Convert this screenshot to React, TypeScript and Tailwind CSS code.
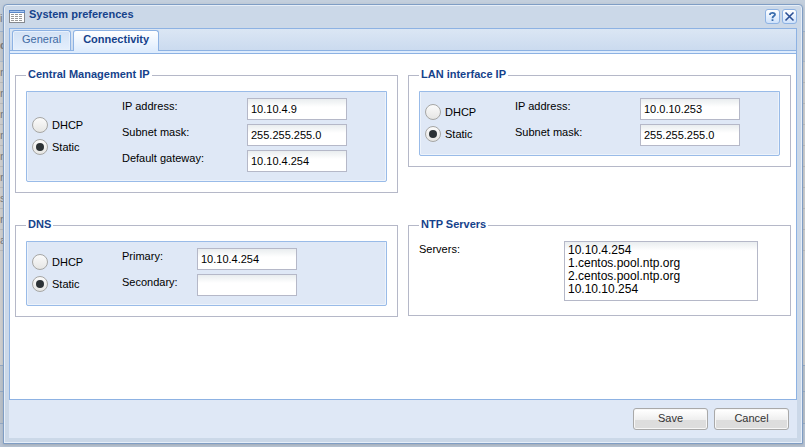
import React, { useId, useState } from "react";

const inputClass =
  "block h-[22px] w-[100px] rounded-none border border-[#b5b8c8] bg-white bg-linear-to-b from-[#e9edef] to-white to-40% px-[3px] text-[11px] text-black outline-none";

function Radio({ name, value, label, defaultChecked }: { name: string; value: string; label: string; defaultChecked?: boolean }) {
  return (
    <label className="flex h-[22px] items-center gap-1 text-[11px] leading-[14px]">
      <input
        type="radio"
        name={name}
        value={value}
        defaultChecked={defaultChecked}
        className="m-0 grid size-4 shrink-0 appearance-none place-items-center rounded-full border border-[#a6a6a4] bg-linear-to-b from-[#fbfbfb] to-[#e6e6e4] before:size-2 before:rounded-full before:bg-transparent before:content-[''] checked:before:bg-[#2c3236]"
      />
      {label}
    </label>
  );
}

function Group({ title, children }: { title: string; children: React.ReactNode }) {
  return (
    <fieldset className="min-w-0 border border-[#b5b8c8] px-[10px] pb-[10px]">
      <legend className="px-[2px] pb-[2px] text-[11px] leading-[14px] font-bold text-[#15428b]">{title}</legend>
      {children}
    </fieldset>
  );
}

type Row = { label: string; value: string };

function AddressPanel({ rows, labelWidth = "w-[125px]" }: { rows: Row[]; labelWidth?: string }) {
  const id = useId();
  return (
    <div className="mt-2 flex items-center rounded-b-xs border border-[#99bbe8] bg-[#dfe8f6] pt-[6px] pb-[9px] pl-[5px] shadow-[inset_1px_0_0_#edf3fb,inset_-1px_-1px_0_#edf3fb]">
      <div className="w-[90px] shrink-0 pt-[2px]">
        <Radio name={id} value="dhcp" label="DHCP" />
        <Radio name={id} value="static" label="Static" defaultChecked />
      </div>
      <div className="flex flex-col gap-1">
        {rows.map((row, i) => (
          <div key={row.label} className="flex">
            <label htmlFor={id + i} className={`${labelWidth} pt-px text-[11px] leading-[14px]`}>
              {row.label}
            </label>
            <input id={id + i} type="text" defaultValue={row.value} className={inputClass} />
          </div>
        ))}
      </div>
    </div>
  );
}

function Tool({ label, children }: { label: string; children: React.ReactNode }) {
  return (
    <button type="button" aria-label={label} className="grid size-[15px] place-items-center rounded-[3px] border border-[#8db2e3] bg-linear-to-b from-white to-[#cfe2fb]">
      {children}
    </button>
  );
}

function ActionButton({ children }: { children: React.ReactNode }) {
  return (
    <button
      type="button"
      className="h-[22px] w-[75px] rounded-[3px] border border-[#a9a9a9] bg-linear-to-b from-white from-5% via-[#eeeeee] via-55% to-[#dddddd] to-55% pb-[2px] text-[11px] text-[#333333] shadow-[inset_0_0_0_1px_#f7f7f7]"
    >
      {children}
    </button>
  );
}

function Backdrop() {
  const rows = ["n", "n", "n", "n", "n", "r", "s", "n", "a"];
  return (
    <div aria-hidden="true" className="absolute inset-0 bg-[#cfcfcf] text-[11px] text-[#777777]">
      <div className="h-[32px] border-b border-[#9fb3ce] bg-[#c3cfdd] pt-[8px] leading-[20px]">i</div>
      <div className="h-[30px] border-b border-[#aebccd] bg-[#c3c8ce] pt-[3px] leading-[20px] font-bold">d</div>
      {rows.map((text, i) => (
        <div key={i} className="h-[21px] border-b border-[#bbbbbb] leading-[20px]">
          {text}
        </div>
      ))}
      <div className="h-[114px]" />
      <div className="h-[27px] border-y border-[#94a9c5] bg-[#bcc3cb]" />
      <div className="h-[32px] border-b border-[#94a9c5] bg-[#b9c0c9]" />
      <div className="h-[23px] bg-[#b8c4d4]" />
    </div>
  );
}

export default function App() {
  const [tab, setTab] = useState("Connectivity");
  return (
    <div className="relative flex h-screen flex-col overflow-hidden pt-1 pr-[2px] pb-[3px] pl-[3px] font-['Liberation_Sans',Arial,sans-serif] text-black">
      <Backdrop />
      <div
        role="dialog"
        aria-labelledby="window-title"
        className="relative flex flex-1 flex-col rounded-t-[4px] border border-[#7f9dc4] bg-[#cbd8e8] px-[5px] pb-[5px] shadow-[inset_0_0_0_1px_#e6eef8,0_1px_3px_#8a8f9680]"
      >
        <header className="flex h-[23px] items-center">
          <svg className="size-4" viewBox="0 0 16 16" shapeRendering="crispEdges" aria-hidden="true">
            <path d="M.5 2.5h15v11H.5z" fill="#fff" stroke="#85898f" />
            <path d="M0 1h16v3H0z" fill="#5b87c7" />
            <path d="M1 2h14v1H1z" fill="#a9c7ee" />
            <path d="M2 5.5h12M2 7.5h12M2 9.5h12M2 11.5h12" stroke="#999" strokeDasharray="3 1" />
          </svg>
          <h1 id="window-title" className="ml-1 flex-1 pb-1.5 text-[11px] leading-[14px] font-bold text-[#15428b]">
            System preferences
          </h1>
          <div className="flex gap-[2px]">
            <Tool label="Help">
              <svg className="size-[11px]" viewBox="0 0 11 11" fill="none" stroke="#3b6eaf" strokeWidth="1.8" aria-hidden="true">
                <path d="M3 4V3.4C3 1.3 8 1.3 8 3.6 8 5.2 5.5 5 5.5 7.2M5.5 8.3v1.6" />
              </svg>
            </Tool>
            <Tool label="Close">
              <svg className="size-[11px]" viewBox="0 0 11 11" fill="none" stroke="#2c4f95" strokeWidth="1.6" aria-hidden="true">
                <path d="m1.5 1.5 8 8M9.500 1.500l-8 8" />
              </svg>
            </Tool>
          </div>
        </header>

        <main className="flex min-h-0 flex-1 flex-col border border-[#8db2e3] bg-white">
          <div role="tablist" className="flex h-[22px] shrink-0 items-end gap-[2px] border-b border-[#8db2e3] bg-linear-to-b from-[#dbe6f4] to-[#cbdbef] px-[2px]">
            {["General", "Connectivity"].map((name) => (
              <button
                key={name}
                type="button"
                role="tab"
                aria-selected={tab === name}
                onClick={() => setTab(name)}
                className="h-5 rounded-t-[3px] border border-b-0 border-[#8db2e3] bg-linear-to-b from-[#d3e2f5] to-[#e4effd] px-[9px] pb-1 text-[11px] leading-[14px] text-[#416aa3] shadow-[inset_0_0_0_1px_#e8f1fc] aria-selected:-mb-px aria-selected:h-[21px] aria-selected:from-white aria-selected:to-[#deecfd] aria-selected:font-bold aria-selected:text-[#15428b] aria-selected:shadow-none"
              >
                {name}
              </button>
            ))}
          </div>
          <div className="h-[3px] shrink-0 border-b border-[#8db2e3] bg-[#deecfd]" />

          <form className="grid grid-cols-2 grid-rows-[150px_auto] items-start gap-x-[10px] px-[5px] pt-[13px]">
            <Group title="Central Management IP">
              <AddressPanel
                rows={[
                  { label: "IP address:", value: "10.10.4.9" },
                  { label: "Subnet mask:", value: "255.255.255.0" },
                  { label: "Default gateway:", value: "10.10.4.254" },
                ]}
              />
            </Group>
            <Group title="LAN interface IP">
              <AddressPanel
                rows={[
                  { label: "IP address:", value: "10.0.10.253" },
                  { label: "Subnet mask:", value: "255.255.255.0" },
                ]}
              />
            </Group>
            <Group title="DNS">
              <AddressPanel
                labelWidth="w-[75px]"
                rows={[
                  { label: "Primary:", value: "10.10.4.254" },
                  { label: "Secondary:", value: "" },
                ]}
              />
            </Group>
            <Group title="NTP Servers">
              <div className="mt-2 flex pb-1">
                <label htmlFor="servers" className="w-[145px] pt-px text-[11px] leading-[14px]">
                  Servers:
                </label>
                <textarea
                  id="servers"
                  rows={4}
                  defaultValue={"10.10.4.254\n1.centos.pool.ntp.org\n2.centos.pool.ntp.org\n10.10.10.254"}
                  className="block h-[60px] w-[194px] resize-none overflow-hidden rounded-none border border-[#b5b8c8] bg-white bg-linear-to-b from-[#e9edef] to-white to-15% px-[3px] py-[2px] text-[12px] leading-[13px] outline-none"
                />
              </div>
            </Group>
          </form>
        </main>

        <footer className="flex h-[38px] shrink-0 items-center justify-end gap-[6px] bg-[#dfe8f6] pr-2">
          <ActionButton>Save</ActionButton>
          <ActionButton>Cancel</ActionButton>
        </footer>
      </div>
    </div>
  );
}
